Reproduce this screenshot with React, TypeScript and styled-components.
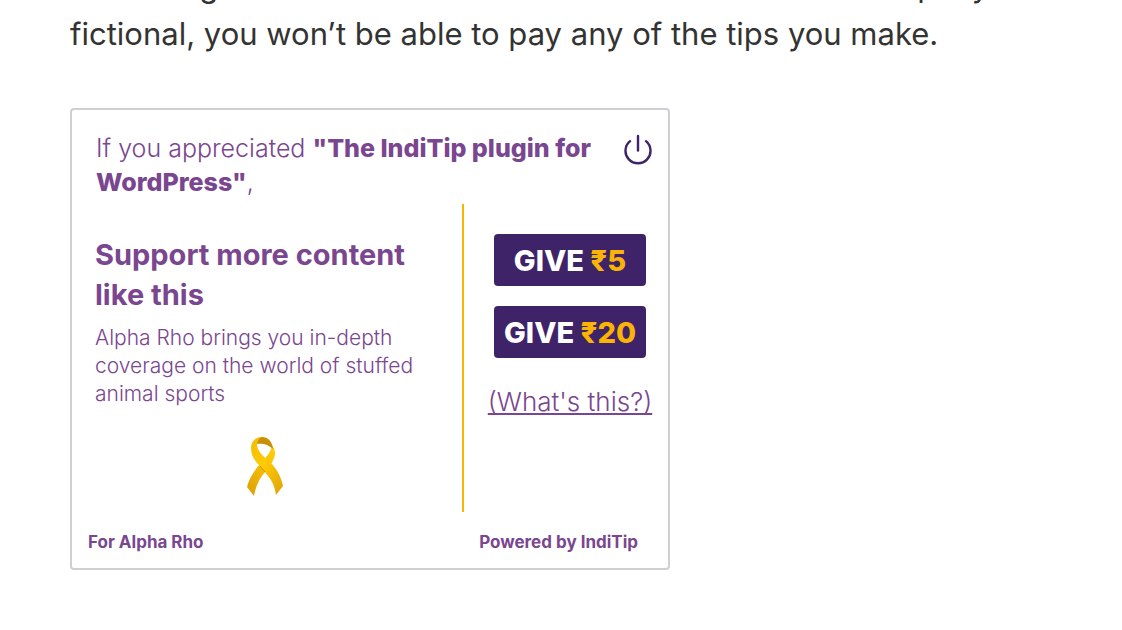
import React from "react";
import styled, { createGlobalStyle } from "styled-components";

const color = {
  ink: "#333332",
  purple: "#7a468f",
  deep: "#3f2369",
  gold: "#f9b406",
  line: "#d0cfd6",
};

const GlobalStyle = createGlobalStyle`
  *, *::before, *::after { box-sizing: border-box; }
  body {
    margin: 0;
    background: #fff;
    color: ${color.purple};
    font-family: Inter, "Liberation Sans", sans-serif;
  }
  h2, p { margin: 0; }
`;

const Page = styled.main`
  padding: 0 70px 60px;
`;

const Excerpt = styled.div`
  display: flex;
  flex-direction: column;
  justify-content: flex-end;
  height: 58px;
  overflow: hidden;
  margin-bottom: 50px;
`;

const Paragraph = styled.p`
  color: ${color.ink};
  font-size: 31px;
  line-height: 48px;
  white-space: nowrap;
`;

const Card = styled.section`
  max-width: 600px;
  border: 2px solid ${color.line};
  border-radius: 4px;
  padding: 21px 16px 14px;
`;

const Header = styled.header`
  display: flex;
  justify-content: space-between;
  align-items: flex-start;
  padding-left: 8px;
`;

const Intro = styled.p`
  font-size: 25px;
  font-weight: 300;
  line-height: 34px;

  strong { font-weight: 800; }
`;

const PowerButton = styled.button`
  display: flex;
  border: 0;
  padding: 0;
  margin-top: 2px;
  background: none;
  color: ${color.deep};
  cursor: pointer;
`;

const Body = styled.div`
  display: flex;
  margin-top: 5px;
`;

const Pitch = styled.div`
  flex: 1;
  padding: 31px 0 0 7px;
  min-height: 308px;
  border-right: 2px solid ${color.gold};
`;

const Title = styled.h2`
  font-size: 29px;
  font-weight: 700;
  line-height: 40px;
`;

const Description = styled.p`
  margin-top: 9px;
  font-size: 21px;
  font-weight: 300;
  line-height: 28px;
`;

const Ribbon = styled.svg`
  display: block;
  margin: 28px auto 0 151px;
`;

const Actions = styled.div`
  display: flex;
  flex-direction: column;
  align-items: center;
  gap: 20px;
  width: 188px;
  padding: 30px 0 0 24px;
`;

const GiveButton = styled.button`
  width: 152px;
  height: 52px;
  border: 0;
  border-radius: 4px;
  padding: 0;
  background: ${color.deep};
  color: #fff;
  font: inherit;
  font-size: 29px;
  font-weight: 800;
  white-space: nowrap;
  cursor: pointer;
`;

const Amount = styled.span`
  color: ${color.gold};
`;

const HelpLink = styled.a`
  margin-top: 8px;
  color: inherit;
  font-size: 26px;
  font-weight: 300;
  line-height: 32px;
  white-space: nowrap;
  text-underline-offset: 2px;
  text-decoration-thickness: 2px;
  text-decoration-skip-ink: none;
`;

const Footer = styled.footer`
  display: flex;
  justify-content: space-between;
  margin-top: 18px;
  padding-right: 14px;
  font-size: 17px;
  font-weight: 700;
  line-height: 24px;
`;

const PowerIcon = () => (
  <svg width="28" height="32" viewBox="0 0 28 32" fill="none" stroke="currentColor" strokeWidth="2.4" strokeLinecap="round" aria-hidden="true">
    <path d="M14 3v14.5" />
    <path d="M6 8.2A12.5 12.5 0 1 0 22 8.2" />
  </svg>
);

const RibbonIcon = () => (
  <Ribbon width="38" height="61" viewBox="0 0 38 61" aria-hidden="true">
    <defs>
      <linearGradient id="tail" x1="0.7" y1="0" x2="0.1" y2="1">
        <stop offset="0" stopColor="#ffcb05" />
        <stop offset="0.5" stopColor="#f1b806" />
        <stop offset="1" stopColor="#dca006" />
      </linearGradient>
      <linearGradient id="front" x1="0" y1="0" x2="0.7" y2="1">
        <stop offset="0" stopColor="#f2bb04" />
        <stop offset="0.5" stopColor="#ffcb05" />
        <stop offset="1" stopColor="#e5aa07" />
      </linearGradient>
    </defs>
    <path d="M26 9C29 13 30 18 28 22C26 28 22 32 19 36C13 43 10 50 8 60L1 51C3 43 8 35 14 28C20 21 25 17 26 9Z" fill="url(#tail)" />
    <path d="M10 8C10 3 13 1 16 1C22 1 26 5 27 13C22 8 17 7 10 8Z" fill="#c99005" />
    <path d="M16 1C9 1 5 6 5 12C5 20 9 25 14 30C17 33 19 36 22 40C27 46 29 52 30 59L37 50C35 40 30 32 24 26C17 20 11 15 11 8C12 4 13 2 16 1Z" fill="url(#front)" />
    <path d="M14 30L19 36" stroke="#cf9705" strokeWidth="1" />
  </Ribbon>
);

export default function App() {
  return (
    <>
      <GlobalStyle />
      <Page>
        <Excerpt>
          <Paragraph>
            A warning: since both the content and the media of a company is
            <br />
            fictional, you won’t be able to pay any of the tips you make.
          </Paragraph>
        </Excerpt>
        <Card>
          <Header>
            <Intro>
              If you appreciated <strong>"The IndiTip plugin for<br />WordPress"</strong>,
            </Intro>
            <PowerButton type="button" aria-label="Turn off">
              <PowerIcon />
            </PowerButton>
          </Header>
          <Body>
            <Pitch>
              <Title>Support more content<br />like this</Title>
              <Description>
                Alpha Rho brings you in-depth<br />coverage on the world of stuffed<br />animal sports
              </Description>
              <RibbonIcon />
            </Pitch>
            <Actions>
              <GiveButton type="button">GIVE <Amount>₹5</Amount></GiveButton>
              <GiveButton type="button">GIVE <Amount>₹20</Amount></GiveButton>
              <HelpLink href="#help">(What's this?)</HelpLink>
            </Actions>
          </Body>
          <Footer>
            <span>For Alpha Rho</span>
            <span>Powered by IndiTip</span>
          </Footer>
        </Card>
      </Page>
    </>
  );
}
